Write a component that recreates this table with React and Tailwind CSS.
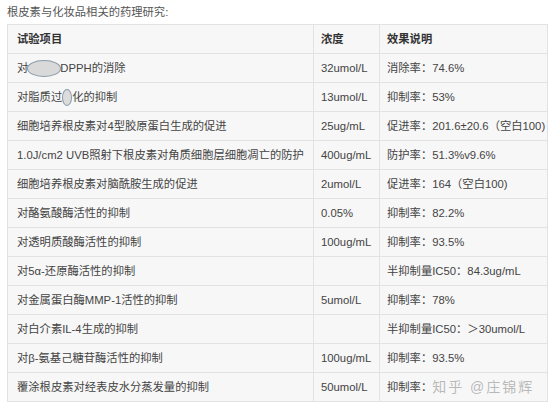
import React from "react";

const rows = [
  ["dpph", "32umol/L", "消除率：74.6%"],
  ["lipid", "13umol/L", "抑制率：53%"],
  ["细胞培养根皮素对4型胶原蛋白生成的促进", "25ug/mL", "促进率：201.6±20.6（空白100)"],
  ["1.0J/cm2 UVB照射下根皮素对角质细胞层细胞凋亡的防护", "400ug/mL", "防护率：51.3%v9.6%"],
  ["细胞培养根皮素对脑酰胺生成的促进", "2umol/L", "促进率：164（空白100)"],
  ["对酪氨酸酶活性的抑制", "0.05%", "抑制率：82.2%"],
  ["对透明质酸酶活性的抑制", "100ug/mL", "抑制率：93.5%"],
  ["对5α-还原酶活性的抑制", "", "半抑制量IC50：84.3ug/mL"],
  ["对金属蛋白酶MMP-1活性的抑制", "5umol/L", "抑制率：78%"],
  ["对白介素IL-4生成的抑制", "", "半抑制量IC50：＞30umol/L"],
  ["对β-氨基己糖苷酶活性的抑制", "100ug/mL", "抑制率：93.5%"],
  ["覆涂根皮素对经表皮水分蒸发量的抑制", "50umol/L", "last"],
];

function First({ v }) {
  if (v === "dpph")
    return (
      <span className="inline-flex items-center">
        对
        <span className="inline-block w-[34px] h-[17px] rounded-[50%] bg-[#d9d9d9] border border-[#8a9aa8] mx-[-1px]" />
        DPPH的消除
      </span>
    );
  if (v === "lipid")
    return (
      <span className="inline-flex items-center">
        对脂质过
        <span className="inline-block w-[10px] h-[17px] rounded-[50%] bg-[#dcdcdc] border border-[#8a9aa8]" />
        化的抑制
      </span>
    );
  return v;
}

function Third({ v }) {
  if (v === "last")
    return (
      <span className="inline-flex items-center whitespace-nowrap">
        抑制率：
        <span className="text-[14px] tracking-[2px] text-[#b8b8b8] [text-shadow:0_0_1px_#fff,0_0_1px_#fff]">
          知乎 @庄锦辉
        </span>
      </span>
    );
  return v;
}

export default function App() {
  return (
    <div
      className="w-[554px] h-[408px] bg-white overflow-hidden text-[#444] text-[11.3px]"
      style={{ fontFamily: '"Liberation Sans", "Noto Sans CJK SC", sans-serif' }}
    >
      <div className="pl-[7px] pt-[5px] h-[24px] text-[#555] leading-[15px]">
        根皮素与化妆品相关的药理研究:
      </div>
      <table className="ml-[7px] w-[540px] border-collapse bg-[#f7f7f7] table-fixed">
        <colgroup>
          <col className="w-[306px]" />
          <col className="w-[66px]" />
          <col className="w-[168px]" />
        </colgroup>
        <thead>
          <tr className="h-[29px]">
            <th className="border border-[#e2e2e2] text-left font-bold text-[#333] pl-[9px]">试验项目</th>
            <th className="border border-[#e2e2e2] text-left font-bold text-[#333] pl-[7px]">浓度</th>
            <th className="border border-[#e2e2e2] text-left font-bold text-[#333] pl-[7px]">效果说明</th>
          </tr>
        </thead>
        <tbody>
          {rows.map((r, i) => (
            <tr key={i} className="h-[29px]">
              <td className="border border-[#e2e2e2] pl-[9px] whitespace-nowrap overflow-hidden">
                <First v={r[0]} />
              </td>
              <td className="border border-[#e2e2e2] pl-[7px] whitespace-nowrap">{r[1]}</td>
              <td className="border border-[#e2e2e2] pl-[7px] whitespace-nowrap overflow-hidden">
                <Third v={r[2]} />
              </td>
            </tr>
          ))}
        </tbody>
      </table>
    </div>
  );
}
